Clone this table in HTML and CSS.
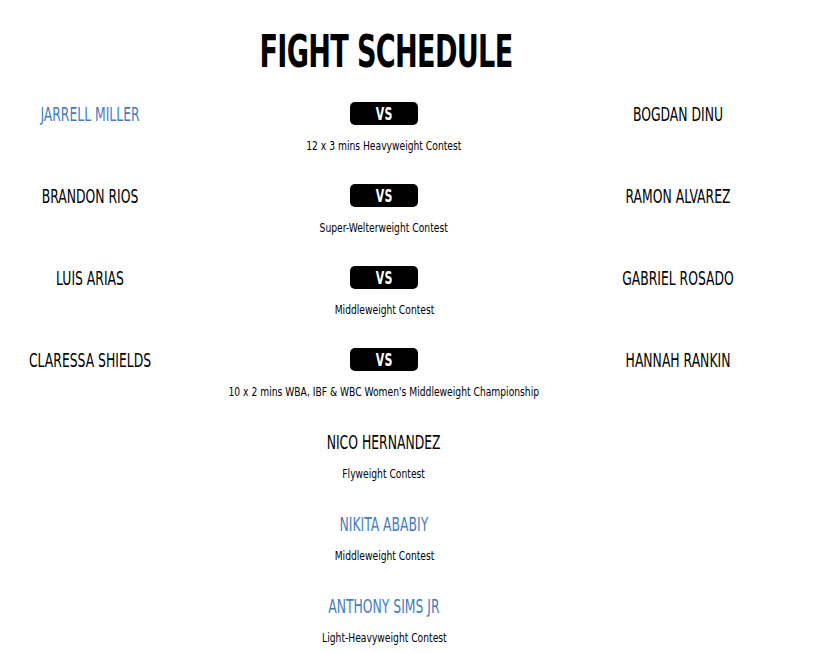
FILE: index.html
```html
<!DOCTYPE html>
<html>
<head>
<meta charset="utf-8">
<link rel="stylesheet" href="styles.css">
</head>
<body>
<div class="page">
  <h1 class="title">FIGHT SCHEDULE</h1>
  <div class="schedule">
    <div class="bout">
      <div class="fighter blue">JARRELL MILLER</div>
      <div class="middle"><span class="vs"><span class="vs-text">VS</span></span><div class="desc">12 x 3 mins Heavyweight Contest</div></div>
      <div class="fighter">BOGDAN DINU</div>
    </div>
    <div class="bout">
      <div class="fighter">BRANDON RIOS</div>
      <div class="middle"><span class="vs"><span class="vs-text">VS</span></span><div class="desc">Super-Welterweight Contest</div></div>
      <div class="fighter">RAMON ALVAREZ</div>
    </div>
    <div class="bout">
      <div class="fighter">LUIS ARIAS</div>
      <div class="middle"><span class="vs"><span class="vs-text">VS</span></span><div class="desc">Middleweight Contest</div></div>
      <div class="fighter">GABRIEL ROSADO</div>
    </div>
    <div class="bout">
      <div class="fighter">CLARESSA SHIELDS</div>
      <div class="middle"><span class="vs"><span class="vs-text">VS</span></span><div class="desc">10 x 2 mins WBA, IBF &amp; WBC Women's Middleweight Championship</div></div>
      <div class="fighter">HANNAH RANKIN</div>
    </div>
    <div class="bout solo">
      <div class="middle"><div class="fighter">NICO HERNANDEZ</div><div class="desc">Flyweight Contest</div></div>
    </div>
    <div class="bout solo">
      <div class="middle"><div class="fighter blue">NIKITA ABABIY</div><div class="desc">Middleweight Contest</div></div>
    </div>
    <div class="bout solo">
      <div class="middle"><div class="fighter blue">ANTHONY SIMS JR</div><div class="desc">Light-Heavyweight Contest</div></div>
    </div>
  </div>
</div>
</body>
</html>
```

FILE: styles.css
```css
html, body {
  margin: 0;
  padding: 0;
  background: #fff;
}
body {
  font-family: "Liberation Sans Narrow", "DejaVu Sans Condensed", "DejaVu Sans", sans-serif;
  color: #000;
}
.page {
  width: 768px;
  padding-top: 26px;
}
.title {
  margin: 0;
  padding-left: 6px;
  text-align: center;
  font-size: 45px;
  font-weight: 700;
  line-height: 52px;
  letter-spacing: -1px;
  transform: scaleX(0.67);
}
.schedule {
  margin-top: 25px;
}
.bout {
  display: grid;
  grid-template-columns: 180px 1fr 180px;
  height: 82px;
}
.bout.solo .middle {
  grid-column: 2;
}
.fighter {
  text-align: center;
  font-size: 19.5px;
  line-height: 23px;
  text-transform: uppercase;
  white-space: nowrap;
  transform: scaleX(0.706);
}
.blue {
  color: #447cc0;
}
.middle {
  display: flex;
  flex-direction: column;
  align-items: center;
}
.vs {
  display: block;
  width: 68px;
  height: 23px;
  margin-top: -1px;
  line-height: 23px;
  background: #000;
  color: #fff;
  border-radius: 5px;
  text-align: center;
  font-weight: 700;
  font-size: 18px;
}
.vs-text {
  display: inline-block;
  transform: scaleX(0.68);
}
.desc {
  margin-top: 12px;
  font-size: 13px;
  line-height: 16px;
  white-space: nowrap;
  transform: scaleX(0.785);
}
.vs + .desc {
  margin-top: 13px;
}
```
